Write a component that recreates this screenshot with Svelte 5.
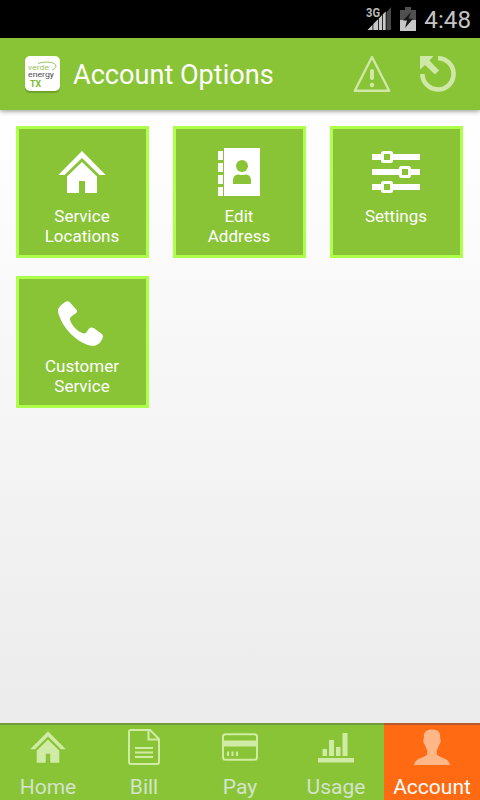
<script>
    let active = $state('Account');

    const options = [
        { icon: 'home', lines: ['Service', 'Locations'] },
        { icon: 'contacts', lines: ['Edit', 'Address'] },
        { icon: 'sliders', lines: ['Settings'] },
        { icon: 'phone', lines: ['Customer', 'Service'] }
    ];

    const tabs = ['Home', 'Bill', 'Pay', 'Usage', 'Account'];
</script>

{#snippet house()}
    <path d="M24 3 L47.7 27 H41.5 L24 10 L6.5 27 H0.3 Z" />
    <path d="M24 14 L39 28.5 V45 H27 V33 H21 V45 H9 V28.5 Z" />
{/snippet}

<div class="screen">
    <div class="status">
        <svg class="signal" width="28" height="26" viewBox="0 0 28 26">
            <path d="M20.5 8.3 L25 3 V26 H20.5 Z" fill="#484848" />
            <path d="M1.5 26 L6.5 20.8 V26 Z M7.3 26 V20 L12 15.2 V26 Z M12.8 26 V14.4 L16 11.1 V26 Z M16.8 26 V10.3 L19.7 7.5 V26 Z" fill="#c8c8c8" />
            <text x="0" y="13" textLength="14" lengthAdjust="spacingAndGlyphs">3G</text>
        </svg>
        <svg class="battery" width="16" height="24" viewBox="0 0 16 24">
            <path d="M5 0 H11 V3 H16 V13 H0 V3 H5 Z" fill="#505050" />
            <path d="M0 13 H16 V24 H0 Z" fill="#c8c8c8" />
            <path d="M11 5 L3 13.5 H7 L5 21 L13 11.7 H8.5 Z" fill="#161616" />
        </svg>
        <span class="clock">4:48</span>
    </div>

    <header>
        <div class="logo">
            <svg width="35" height="35" viewBox="0 0 35 35">
                <path d="M13 7.5 C21 5 31 6 31 10 C31 12 29 13 27 14" fill="none" stroke="#8cbf4e" stroke-width="0.9" />
                <text x="3" y="13.7" textLength="21" lengthAdjust="spacingAndGlyphs" fill="#9bc45c" font-size="6.8">verde</text>
                <text x="3" y="21.4" textLength="26" lengthAdjust="spacingAndGlyphs" fill="#4c4c52" font-size="6.8">energy</text>
                <text x="5" y="31" textLength="11" lengthAdjust="spacingAndGlyphs" fill="#7dbb2f" font-size="8.6" font-weight="bold">TX</text>
            </svg>
        </div>
        <h1>Account Options</h1>
        <svg class="alert" width="38" height="38" viewBox="0 0 38 38">
            <path d="M19 2 L36.2 35.7 H1.8 Z" fill="none" stroke="#cfe8a8" stroke-width="2.4" stroke-linejoin="round" />
            <path d="M19 16 V23" stroke="#cfe8a8" stroke-width="4" stroke-linecap="round" />
            <circle cx="19" cy="30" r="2.2" fill="#cfe8a8" />
        </svg>
        <svg class="refresh" width="38" height="38" viewBox="0 0 38 38">
            <path d="M19 3.3 A15.6 15.6 0 1 1 3.4 19" fill="none" stroke="#cfe8a8" stroke-width="4.6" />
            <path d="M1 1 H14.5 L10.5 5.5 L20 15.5 L16 19.5 L6 10 L1 14.5 Z" fill="#cfe8a8" />
        </svg>
    </header>

    <main>
        {#each options as option}
            <button class="tile">
                <svg width="48" height="48" viewBox="0 0 48 48" fill="#fff">
                    {#if option.icon === 'home'}
                        {@render house()}
                    {:else if option.icon === 'contacts'}
                        <g transform="translate(3 0)">
                            <path d="M0 3 H5 V12 H0 Z M0 15 H5 V24 H0 Z M0 27 H5 V36 H0 Z M0 39 H5 V48 H0 Z M6 0 H42 V48 H6 Z" />
                            <circle cx="24" cy="18" r="6" fill="#89c436" />
                            <path d="M15 36 V32.5 C15 28.5 17.5 26.5 20.5 26.5 Q24 27.7 27.5 26.5 C30.5 26.5 33 28.5 33 32.5 V36 Z" fill="#89c436" />
                        </g>
                    {:else if option.icon === 'sliders'}
                        <path d="M0 6 H48 V12 H0 Z M0 21 H48 V27 H0 Z M0 36 H48 V42 H0 Z" />
                        <g fill="#89c436" stroke="#fff" stroke-width="3">
                            <rect x="10.5" y="4.5" width="9" height="9" rx="1" />
                            <rect x="28.5" y="19.5" width="9" height="9" rx="1" />
                            <rect x="10.5" y="34.5" width="9" height="9" rx="1" />
                        </g>
                    {:else}
                        <path d="M5.5 5.2 C8 3.3 10 2.4 12 4.5 L18 11.2 C20 13.5 19 14.5 16.5 16.3 C13 18.5 11.5 19.5 12.2 22.3 C13.5 27.5 20 34 25 35.3 C27.5 36 28.5 34.5 30 32 C31.5 29.5 33.5 28.5 36 30.3 L43.3 35.5 C45.5 37.2 45.3 39 44 41.5 C41 47 37.5 48.3 32 47.5 C17 43.5 4 29 0.2 14.5 C-0.5 10 2 7.8 5.5 5.2 Z" />
                    {/if}
                </svg>
                <span>
                    {#each option.lines as line}
                        <span class="line">{line}</span>
                    {/each}
                </span>
            </button>
        {/each}
    </main>

    <nav>
        {#each tabs as tab}
            <button class="tab" class:active={tab === active} onclick={() => (active = tab)}>
                <svg width="36" height="36" viewBox="0 0 36 36" fill="#cfeba5">
                    {#if tab === 'Home'}
                        <g transform="scale(0.75)">{@render house()}</g>
                    {:else if tab === 'Bill'}
                        <path d="M4 1 H24 L33 10 V33 Q33 35 31 35 H5 Q3 35 3 33 V3 Q3 1 5 1 Z M22.5 1 V10.5 H33" fill="none" stroke="#cfeba5" stroke-width="2" />
                        <path d="M9 18 H27 V20 H9 Z M9 22.5 H27 V24.5 H9 Z M9 27 H27 V29 H9 Z" />
                    {:else if tab === 'Pay'}
                        <rect x="1" y="5.2" width="34" height="25.5" rx="2.5" fill="none" stroke="#cfeba5" stroke-width="2" />
                        <path d="M1 11.5 H35 V17.5 H1 Z M5 22.5 H7 V27 H5 Z M9.5 22.5 H11.5 V27 H9.5 Z M14 22.5 H16 V27 H14 Z" />
                    {:else if tab === 'Usage'}
                        <path d="M0 29 H36 V33.5 H0 Z M4.5 20 H9 V27 H4.5 Z M11 11 H16 V27 H11 Z M18 18 H22.5 V27 H18 Z M24.5 4 H29.5 V27 H24.5 Z" />
                    {:else}
                        <path d="M18 0.5 C24 0.5 27 3.5 26 9 L26.8 11 C26.8 13 26 15 25 16 C24.5 18 23.5 20 22.8 21.5 V25.5 C25 28.5 35 29 36 36 H0 C1 29 11 28.5 13.2 25.5 V21.5 C12.5 20 11.5 18 11 16 C10 15 9.2 13 9.2 11 L10 9 C9 3.5 12 0.5 18 0.5 Z" fill="#ffb78a" />
                    {/if}
                </svg>
                <span>{tab}</span>
            </button>
        {/each}
    </nav>
</div>

<style>
    :global(body) {
        margin: 0;
    }

    .screen {
        display: flex;
        flex-direction: column;
        width: 480px;
        height: 800px;
        overflow: hidden;
        font-family: Roboto, sans-serif;
        background: linear-gradient(#fff 110px, #e9e9e9 800px);
    }

    .status {
        display: flex;
        box-sizing: border-box;
        height: 38px;
        padding: 5px 9px 0 0;
        justify-content: flex-end;
        background: #000;
    }

    .signal text {
        font-size: 13px;
        font-weight: bold;
        fill: #bbb;
        stroke: #000;
        stroke-width: 2px;
        paint-order: stroke;
    }

    .signal {
        margin: -1px 6px 0 0;
    }

    .battery {
        margin: 2px 8px 0 0;
    }

    .clock {
        font-size: 24.2px;
        line-height: 30px;
        color: #c4c4c4;
    }

    header {
        display: flex;
        flex: none;
        align-items: center;
        box-sizing: border-box;
        height: 72px;
        padding: 0 23px 0 25px;
        background: #89c436;
        box-shadow: 0 1px 5px rgba(0, 0, 0, 0.45);
    }

    .logo {
        width: 35px;
        height: 35px;
        margin-bottom: 2px;
        border-radius: 5px;
        background: #fff;
        box-shadow: 0 2px 1px #6da029;
    }

    h1 {
        flex: 1;
        margin: 3px 0 0 13px;
        font-size: 27.1px;
        font-weight: normal;
        line-height: 33px;
        color: #fff;
        white-space: nowrap;
    }

    .refresh {
        margin-left: 28px;
    }

    main {
        display: grid;
        flex: 1;
        grid-template-columns: repeat(3, 133px);
        grid-auto-rows: 132px;
        gap: 18px 24px;
        align-content: start;
        padding: 16px;
    }

    button {
        display: flex;
        flex-direction: column;
        align-items: center;
        margin: 0;
        border: 0;
        padding: 0;
        font-family: inherit;
        color: #fff;
        background: #89c436;
    }

    .tile {
        border: 3px solid #adff4b;
        padding: 19px 1px 0 0;
        font-size: 17px;
        line-height: 20px;
    }

    .tile svg {
        margin-bottom: 10px;
        overflow: visible;
    }

    .line {
        display: block;
    }

    nav {
        display: grid;
        flex: none;
        grid-template-columns: repeat(5, 96px);
        height: 77px;
    }

    .tab {
        border-top: 2px solid #719b3c;
        border-bottom: 1px solid #629622;
        padding-top: 4px;
        font-size: 21px;
        line-height: 26px;
        color: #d3e3cc;
    }

    .tab svg {
        margin-bottom: 9px;
    }

    .active {
        border-top-color: #b75b2c;
        border-bottom-color: #c54a00;
        color: #fff;
        background: #ff6a13;
    }
</style>
